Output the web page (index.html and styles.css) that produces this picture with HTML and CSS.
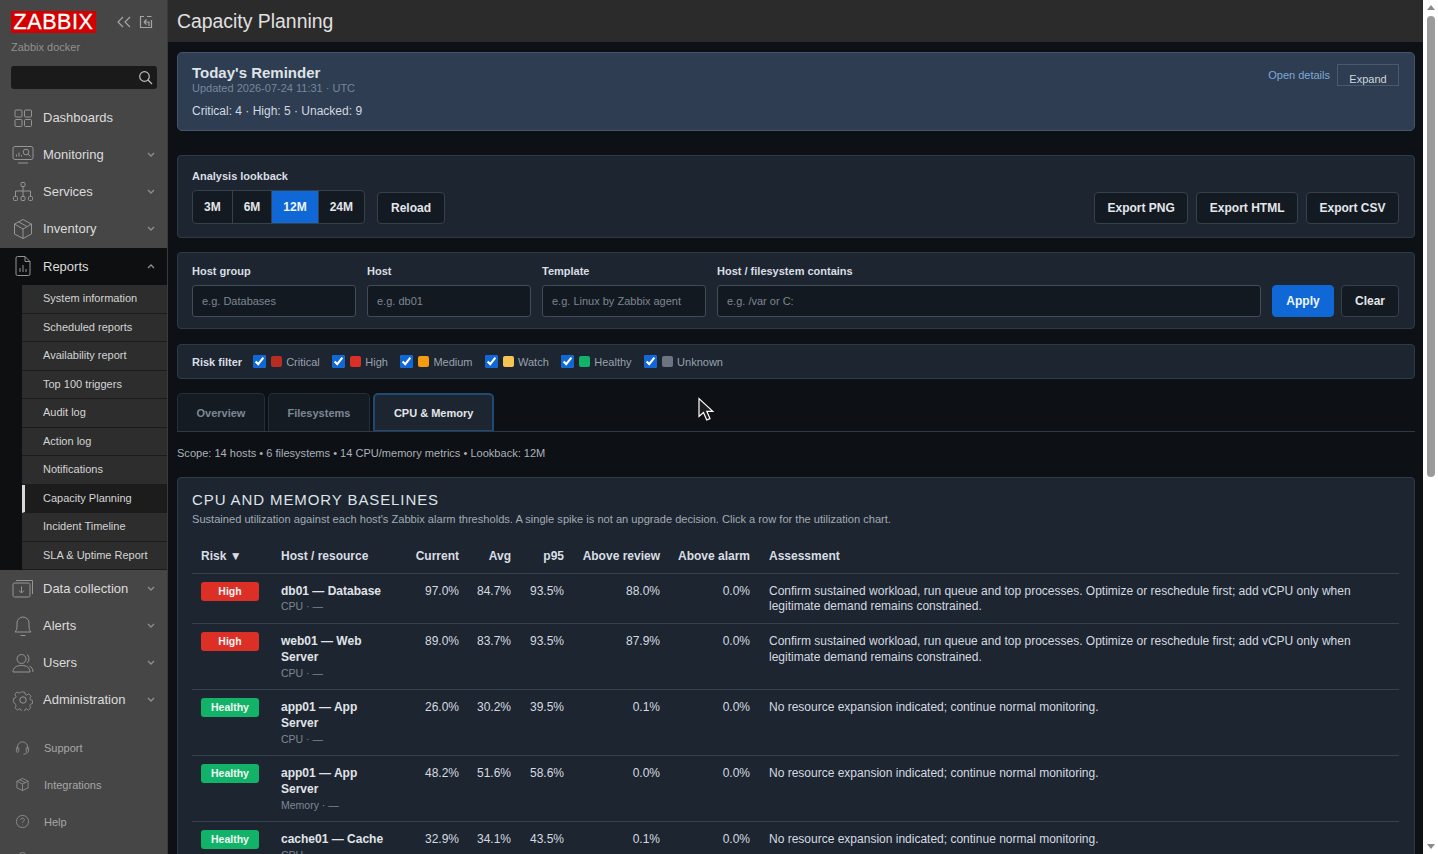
FILE: index.html
```html
<!DOCTYPE html>
<html lang="en">
<head>
  <meta charset="UTF-8" />
  <title>Capacity Planning</title>
  <link rel="stylesheet" href="styles.css">
</head>
<body>

  <aside class="sidebar">
    <div class="brand">
      <div class="logo">ZABBIX</div>
      <div class="brand-tools">
        <svg width="16" height="14" viewBox="0 0 16 14"><path d="M7 2 2 7l5 5M14 2 9 7l5 5"/></svg>
        <svg width="14" height="14" viewBox="0 0 14 14"><path d="M5 1.500H1.500v11h11V5M8 1.500h4.500M5 7l2.500-2.500M5 7l2.500 2.500M5 7h5v4"/></svg>
      </div>
    </div>
    <div class="instance">Zabbix docker</div>
    <div class="search">
      <svg width="15" height="15" viewBox="0 0 15 15"><circle cx="6.500" cy="6.500" r="4.800"/><path d="m10 10 4 4"/></svg>
    </div>

    <nav class="menu">
      <a class="menu-item">
        <svg class="menu-icon" viewBox="0 0 22 22"><rect x="3" y="3" width="7" height="7" rx="1"/><rect x="12.500" y="3" width="7" height="7" rx="1"/><rect x="3" y="12.500" width="7" height="7" rx="1"/><rect x="12.500" y="12.500" width="7" height="7" rx="1"/></svg>
        <span>Dashboards</span>
      </a>
      <a class="menu-item">
        <svg class="menu-icon" viewBox="0 0 22 22"><rect x="1" y="2.500" width="20" height="13" rx="2"/><path d="M6 19h10M4.500 12.500v-2M7 12.500v-4M9.500 12.500v-1.500"/><circle cx="14" cy="8" r="2.800"/><path d="m16 10 2.500 2.500"/></svg>
        <span>Monitoring</span>
        <svg class="chev" width="8" height="5" viewBox="0 0 8 5"><path d="m1 1 3 3 3-3"/></svg>
      </a>
      <a class="menu-item">
        <svg class="menu-icon" viewBox="0 0 22 22"><rect x="9" y="1.500" width="4" height="4" rx="1"/><path d="M11 5.500V10M3.500 15v-5h15v5M11 10v5"/><rect x="1.500" y="15.500" width="4" height="4" rx="1"/><rect x="9" y="15.500" width="4" height="4" rx="1"/><rect x="16.500" y="15.500" width="4" height="4" rx="1"/></svg>
        <span>Services</span>
        <svg class="chev" width="8" height="5" viewBox="0 0 8 5"><path d="m1 1 3 3 3-3"/></svg>
      </a>
      <a class="menu-item">
        <svg class="menu-icon" viewBox="0 0 22 22"><path d="M11 1.500 19.500 6v10L11 20.500 2.500 16V6zM2.500 6 11 11l8.500-5M11 11v9.500M6.500 3.800l8.500 4.700"/></svg>
        <span>Inventory</span>
        <svg class="chev" width="8" height="5" viewBox="0 0 8 5"><path d="m1 1 3 3 3-3"/></svg>
      </a>
      <a class="menu-item open">
        <svg class="menu-icon" viewBox="0 0 22 22"><path d="M4 3a1.500 1.500 0 0 1 1.500-1.500H13l5 5V19a1.500 1.500 0 0 1-1.500 1.500h-11A1.500 1.500 0 0 1 4 19zM13 1.500V6.500h5M8 17v-4M11 17v-7M14 17v-3"/></svg>
        <span>Reports</span>
        <svg class="chev" width="8" height="5" viewBox="0 0 8 5"><path d="m1 4 3-3 3 3"/></svg>
      </a>
      <div class="submenu">
        <a>System information</a>
        <a>Scheduled reports</a>
        <a>Availability report</a>
        <a>Top 100 triggers</a>
        <a>Audit log</a>
        <a>Action log</a>
        <a>Notifications</a>
        <a class="current">Capacity Planning</a>
        <a>Incident Timeline</a>
        <a>SLA &amp; Uptime Report</a>
      </div>
      <a class="menu-item">
        <svg class="menu-icon" viewBox="0 0 22 22"><rect x="1" y="5" width="17" height="14" rx="1.500"/><path d="M4 2.500h16.500V16M9.500 8.500v6M7 12.500l2.500 2.500 2.500-2.500"/></svg>
        <span>Data collection</span>
        <svg class="chev" width="8" height="5" viewBox="0 0 8 5"><path d="m1 1 3 3 3-3"/></svg>
      </a>
      <a class="menu-item">
        <svg class="menu-icon" viewBox="0 0 22 22"><path d="M3 17c1.500-1.500 2-3 2-6V8a6 6 0 0 1 12 0v3c0 3 .5 4.500 2 6zM8.500 20.500h5"/></svg>
        <span>Alerts</span>
        <svg class="chev" width="8" height="5" viewBox="0 0 8 5"><path d="m1 1 3 3 3-3"/></svg>
      </a>
      <a class="menu-item">
        <svg class="menu-icon" viewBox="0 0 22 22"><circle cx="9.500" cy="7" r="4.500"/><path d="M1 20c0-4 3-6.500 8.500-6.500S18 16 18 20zM15 2.500c2.500 1.500 2.500 7 0 8.500M17.500 14c2 1 3.500 3 3.500 6"/></svg>
        <span>Users</span>
        <svg class="chev" width="8" height="5" viewBox="0 0 8 5"><path d="m1 1 3 3 3-3"/></svg>
      </a>
      <a class="menu-item">
        <svg class="menu-icon" viewBox="0 0 22 22"><circle cx="11" cy="11" r="3.200"/><path d="M9 1.500h4l.6 2.800 1.800.8 2.500-1.500 2.700 2.900-1.600 2.300.7 1.900 2.500.8v3.800l-2.500.7-.8 1.800 1.400 2.400-2.800 2.700-2.400-1.500-1.800.7-.6 2.800H9l-.6-2.800-1.800-.7-2.400 1.500-2.800-2.700 1.400-2.400-.8-1.800L-.5 13V9.200l2.500-.8.700-1.900L1.100 4.200l2.700-2.900 2.500 1.500 1.800-.8z" transform="translate(1.800 1.800) scale(.84)"/></svg>
        <span>Administration</span>
        <svg class="chev" width="8" height="5" viewBox="0 0 8 5"><path d="m1 1 3 3 3-3"/></svg>
      </a>
    </nav>

    <nav class="side-footer">
      <a>
        <svg class="foot-icon" viewBox="0 0 16 16"><path d="M2.500 10V7.500a5.500 5.500 0 0 1 11 0V10"/><rect x="1.500" y="8" width="2.500" height="5" rx="1"/><rect x="12" y="8" width="2.500" height="5" rx="1"/><path d="M13 13c0 1.500-2 2-4 2"/></svg>
        <span>Support</span>
      </a>
      <a>
        <svg class="foot-icon" viewBox="0 0 16 16"><path d="M8 1.500 14 4.500v7l-6 3-6-3v-7zM2 4.500l6 3 6-3M8 7.500v7M5 3l6 3"/></svg>
        <span>Integrations</span>
      </a>
      <a>
        <svg class="foot-icon" viewBox="0 0 16 16"><circle cx="8" cy="8" r="6.500"/><path d="M6 6.300c0-2.500 4-2.500 4 0 0 1.500-2 1.500-2 3.200M8 11.500v.5"/></svg>
        <span>Help</span>
      </a>
      <a>
        <svg class="foot-icon" viewBox="0 0 16 16"><circle cx="8" cy="5" r="3.500"/><path d="M2 15c0-3 2.500-5 6-5s6 2 6 5"/></svg>
      </a>
    </nav>
  </aside>

  <div class="page">
    <header class="topbar"><h1>Capacity Planning</h1></header>

    <main class="content">

      <section class="reminder">
        <div>
          <div class="reminder-title">Today's Reminder</div>
          <div class="reminder-time">Updated 2026-07-24 11:31 · UTC</div>
          <div class="reminder-counts">Critical: 4 · High: 5 · Unacked: 9</div>
        </div>
        <div class="reminder-actions">
          <a class="details-link">Open details</a>
          <button class="expand-btn">Expand</button>
        </div>
      </section>

      <section class="panel lookback">
        <div>
          <div class="field-label">Analysis lookback</div>
          <div class="lookback-row">
            <div class="segment">
              <button>3M</button>
              <button>6M</button>
              <button class="active">12M</button>
              <button>24M</button>
            </div>
            <button class="btn">Reload</button>
          </div>
        </div>
        <div class="exports">
          <button class="btn">Export PNG</button>
          <button class="btn">Export HTML</button>
          <button class="btn">Export CSV</button>
        </div>
      </section>

      <section class="panel filters">
        <label class="field w-small"><span class="field-label">Host group</span><input placeholder="e.g. Databases"></label>
        <label class="field w-small"><span class="field-label">Host</span><input placeholder="e.g. db01"></label>
        <label class="field w-small"><span class="field-label">Template</span><input placeholder="e.g. Linux by Zabbix agent"></label>
        <label class="field w-grow"><span class="field-label">Host / filesystem contains</span><input placeholder="e.g. /var or C:"></label>
        <button class="btn primary">Apply</button>
        <button class="btn clear">Clear</button>
      </section>

      <section class="panel risk-filter">
        <strong>Risk filter</strong>
        <label><input type="checkbox" checked><i class="swatch critical"></i>Critical</label>
        <label><input type="checkbox" checked><i class="swatch high"></i>High</label>
        <label><input type="checkbox" checked><i class="swatch medium"></i>Medium</label>
        <label><input type="checkbox" checked><i class="swatch watch"></i>Watch</label>
        <label><input type="checkbox" checked><i class="swatch healthy"></i>Healthy</label>
        <label><input type="checkbox" checked><i class="swatch unknown"></i>Unknown</label>
      </section>

      <div class="tabs">
        <button class="tab">Overview</button>
        <button class="tab">Filesystems</button>
        <button class="tab active">CPU &amp; Memory</button>
      </div>

      <div class="scope">Scope: 14 hosts • 6 filesystems • 14 CPU/memory metrics • Lookback: 12M</div>

      <section class="panel baselines">
        <h2>CPU and memory baselines</h2>
        <p>Sustained utilization against each host's Zabbix alarm thresholds. A single spike is not an upgrade decision. Click a row for the utilization chart.</p>
        <table>
          <colgroup>
            <col class="c-risk"><col class="c-host"><col class="c-cur"><col class="c-avg"><col class="c-p95"><col class="c-review"><col class="c-alarm"><col>
          </colgroup>
          <thead>
            <tr>
              <th>Risk ▼</th>
              <th>Host / resource</th>
              <th class="num">Current</th>
              <th class="num">Avg</th>
              <th class="num">p95</th>
              <th class="num">Above review</th>
              <th class="num">Above alarm</th>
              <th>Assessment</th>
            </tr>
          </thead>
          <tbody>
            <tr>
              <td><span class="badge high">High</span></td>
              <td><div class="host">db01 — Database</div><div class="res">CPU · —</div></td>
              <td class="num">97.0%</td><td class="num">84.7%</td><td class="num">93.5%</td><td class="num">88.0%</td><td class="num">0.0%</td>
              <td>Confirm sustained workload, run queue and top processes. Optimize or reschedule first; add vCPU only when legitimate demand remains constrained.</td>
            </tr>
            <tr>
              <td><span class="badge high">High</span></td>
              <td><div class="host">web01 — Web Server</div><div class="res">CPU · —</div></td>
              <td class="num">89.0%</td><td class="num">83.7%</td><td class="num">93.5%</td><td class="num">87.9%</td><td class="num">0.0%</td>
              <td>Confirm sustained workload, run queue and top processes. Optimize or reschedule first; add vCPU only when legitimate demand remains constrained.</td>
            </tr>
            <tr>
              <td><span class="badge healthy">Healthy</span></td>
              <td><div class="host">app01 — App Server</div><div class="res">CPU · —</div></td>
              <td class="num">26.0%</td><td class="num">30.2%</td><td class="num">39.5%</td><td class="num">0.1%</td><td class="num">0.0%</td>
              <td>No resource expansion indicated; continue normal monitoring.</td>
            </tr>
            <tr>
              <td><span class="badge healthy">Healthy</span></td>
              <td><div class="host">app01 — App Server</div><div class="res">Memory · —</div></td>
              <td class="num">48.2%</td><td class="num">51.6%</td><td class="num">58.6%</td><td class="num">0.0%</td><td class="num">0.0%</td>
              <td>No resource expansion indicated; continue normal monitoring.</td>
            </tr>
            <tr>
              <td><span class="badge healthy">Healthy</span></td>
              <td><div class="host">cache01 — Cache</div><div class="res">CPU · —</div></td>
              <td class="num">32.9%</td><td class="num">34.1%</td><td class="num">43.5%</td><td class="num">0.1%</td><td class="num">0.0%</td>
              <td>No resource expansion indicated; continue normal monitoring.</td>
            </tr>
          </tbody>
        </table>
      </section>
    </main>
  </div>

  <div class="scrollbar">
    <i class="arrow up"></i>
    <div class="thumb-track"><div class="thumb"></div></div>
    <i class="arrow down"></i>
  </div>

  <!-- mouse pointer from the capture -->
  <svg class="pointer" width="18" height="25" viewBox="0 0 18 25"><path d="M2 1.500v18l4.500-4 3.200 7.500 3.300-1.400-3.200-7.300h6z"/></svg>

</body>
</html>
```

FILE: styles.css
```css
* {
  box-sizing: border-box;
}

html, body {
  height: 100%;
}

body {
  margin: 0;
  display: flex;
  overflow: hidden;
  background-color: #0d1014;
  color: #d9dee4;
  font-family: 'Liberation Sans', Arial, sans-serif;
  font-size: 12px;
}

button, input {
  font-family: inherit;
}

/* Sidebar */
.sidebar {
  flex: 0 0 168px;
  height: 854px;
  overflow: hidden;
  background-color: #464646;
  border-right: 1px solid #3a3a3a;
}

.brand {
  display: flex;
  align-items: center;
  justify-content: space-between;
  padding: 11px 14px 0 11px;
}

.logo {
  width: 85px;
  height: 22px;
  background-color: #d40000;
  color: #fff;
  font-size: 21.500px;
  line-height: 23px;
  text-align: center;
  letter-spacing: 0.6px;
  -webkit-text-stroke: 0.3px #fff;
}

.brand-tools {
  display: flex;
  align-items: center;
  gap: 7px;
}

.brand-tools svg {
  fill: none;
  stroke: #a5a5a5;
  stroke-width: 1.2;
}

.instance {
  margin: 7px 0 0 11px;
  color: #909090;
  font-size: 11px;
  line-height: 14px;
}

.search {
  display: flex;
  align-items: center;
  justify-content: flex-end;
  height: 23px;
  margin: 12px 10px 0 11px;
  padding-right: 4px;
  background-color: #1a1a1a;
  border-radius: 3px;
}

.search svg {
  fill: none;
  stroke: #bdbdbd;
  stroke-width: 1.2;
}

.menu {
  margin-top: 10px;
}

.menu-item {
  display: flex;
  align-items: center;
  position: relative;
  height: 37px;
  padding-left: 12px;
  color: #dcdcdc;
  font-size: 13px;
}

.menu-item span {
  margin-left: 9px;
}

.menu-item.open {
  background-color: #0e0f11;
  border-top: 1px solid #464646;
}

.menu-icon {
  flex: none;
  width: 22px;
  height: 22px;
  fill: none;
  stroke: #959595;
  stroke-width: 1;
}

.chev {
  margin-left: auto;
  margin-right: 12px;
  fill: none;
  stroke: #8f8f8f;
  stroke-width: 1.3;
}

.submenu {
  padding: 1px 0 0 22px;
  background-color: #0e0f11;
}

.submenu a {
  display: block;
  height: 28.500px;
  padding-left: 21px;
  background-color: #2d2d2d;
  border-bottom: 1px solid #1b1b1b;
  color: #d4d4d4;
  font-size: 11px;
  line-height: 27px;
}

.submenu a.current {
  padding-left: 18px;
  background-color: #1c1c1c;
  border-left: 3px solid #d8d8d8;
}

.side-footer {
  margin-top: 11px;
}

.side-footer a {
  display: flex;
  align-items: center;
  height: 37px;
  padding-left: 15px;
  color: #a6a6a6;
  font-size: 11px;
}

.side-footer span {
  margin-left: 14px;
}

.foot-icon {
  flex: none;
  width: 15px;
  height: 15px;
  fill: none;
  stroke: #8c8c8c;
  stroke-width: 1;
}

/* Main column */
.page {
  flex: 0 0 1255px;
  height: 854px;
  overflow: hidden;
}

.topbar {
  height: 42px;
  padding: 10px 9px 0;
  background-color: #2b2b2b;
}

.topbar h1 {
  margin: 0;
  color: #e0e0e0;
  font-size: 19.4px;
  font-weight: normal;
  line-height: 23px;
}

.content {
  padding: 10px 8px 0 9px;
}

.panel {
  background-color: #1d2530;
  border: 1px solid #2f3a47;
  border-radius: 4px;
}

.reminder {
  display: flex;
  justify-content: space-between;
  height: 79px;
  padding: 11px 15px 0 14px;
  background-color: #2e3d51;
  border: 1px solid #46566a;
  border-radius: 5px;
}

.reminder-title {
  color: #dfe3e8;
  font-size: 15px;
  font-weight: bold;
  line-height: 17px;
}

.reminder-time {
  color: #76879b;
  font-size: 11px;
  line-height: 14px;
}

.reminder-counts {
  margin-top: 8.500px;
  color: #d3d9e0;
  font-size: 12px;
  line-height: 15px;
}

.reminder-actions {
  display: flex;
  align-items: flex-start;
  gap: 7px;
}

.details-link {
  margin-top: 4px;
  color: #7fa8d8;
  font-size: 11px;
  line-height: 15px;
}

.expand-btn {
  width: 62px;
  height: 22px;
  padding: 7px 0 0;
  background: none;
  border: 1px solid #4a5a6e;
  color: #d0d6dd;
  font-size: 11px;
  line-height: 14px;
}

.field-label {
  display: block;
  color: #d9dee4;
  font-size: 11px;
  font-weight: bold;
  line-height: 14px;
}

.lookback {
  display: flex;
  justify-content: space-between;
  align-items: flex-end;
  height: 83px;
  margin-top: 24px;
  padding: 14px 15px 13px 14px;
}

.lookback-row {
  display: flex;
  align-items: flex-end;
  gap: 12px;
  margin-top: 7px;
}

.segment {
  display: flex;
  background-color: #141a22;
  border: 1px solid #36414e;
  border-radius: 4px;
  overflow: hidden;
}

.segment button {
  height: 32px;
  padding: 0 11px;
  background: none;
  border: 0;
  border-right: 1px solid #36414e;
  color: #e3e6ea;
  font-size: 12px;
  font-weight: bold;
}

.segment button:last-child {
  border-right: 0;
}

.segment button.active {
  background-color: #0f68d6;
  color: #f1f6fc;
}

.btn {
  height: 32px;
  padding: 0 13px;
  background-color: #141a22;
  border: 1px solid #36414e;
  border-radius: 4px;
  color: #e3e6ea;
  font-size: 12px;
  font-weight: bold;
}

.btn.primary {
  width: 62px;
  margin-left: 11px;
  padding: 0;
  background-color: #0f68d6;
  border-color: #0f68d6;
  color: #f1f6fc;
}

.btn.clear {
  width: 58px;
  margin-left: 7px;
  padding: 0;
}

.exports {
  display: flex;
  gap: 8px;
}

.exports .btn {
  padding: 0 12.500px;
}

.filters {
  display: flex;
  align-items: flex-end;
  height: 77px;
  margin-top: 14px;
  padding: 0 15px 11px 14px;
}

.field {
  margin-right: 11px;
}

.field:last-of-type {
  margin-right: 0;
}

.w-small {
  flex: 0 0 164px;
}

.w-grow {
  flex: 1;
}

.field input {
  display: block;
  width: 100%;
  height: 32px;
  margin-top: 7px;
  padding: 0 9px;
  background-color: #131920;
  border: 1px solid #414c59;
  border-radius: 3px;
  color: #d9dee4;
  font-size: 11px;
}

.field input::placeholder {
  color: #7c8692;
  opacity: 1;
}

.risk-filter {
  display: flex;
  align-items: center;
  gap: 12.500px;
  height: 35px;
  margin-top: 15px;
  padding: 0 15px 0 14px;
  color: #98a2ad;
  font-size: 11px;
}

.risk-filter strong {
  margin-right: -1.500px;
  color: #d9dee4;
}

.risk-filter label {
  display: flex;
  align-items: center;
}

.risk-filter input {
  width: 13px;
  height: 13px;
  margin: 0 5px 0 0;
  accent-color: #0f68d6;
}

.swatch {
  width: 11px;
  height: 11px;
  margin-right: 4px;
  border-radius: 2px;
}

.swatch.critical { background-color: #b92c22; }
.swatch.high { background-color: #dc2f26; }
.swatch.medium { background-color: #f39c12; }
.swatch.watch { background-color: #f6c453; }
.swatch.healthy { background-color: #12b368; }
.swatch.unknown { background-color: #6b7480; }

.tabs {
  display: flex;
  gap: 3px;
  height: 39px;
  margin-top: 14px;
  border-bottom: 1px solid #2f3a47;
}

.tab {
  height: 38px;
  padding: 0 18.500px;
  background-color: #151b23;
  border: 1px solid #252e39;
  border-bottom: 0;
  border-radius: 5px 5px 0 0;
  color: #7e8894;
  font-size: 11px;
  font-weight: bold;
}

.tab.active {
  padding: 0 19px;
  background-color: #1d2530;
  border: 2px solid #1f4a75;
  border-bottom: 1px solid #1f4a75;
  color: #e3e6ea;
}

.scope {
  margin-top: 14px;
  color: #aab2bb;
  font-size: 11.050px;
  line-height: 14px;
}

.baselines {
  margin-top: 17px;
  padding: 13px 15px 0 14px;
}

.baselines h2 {
  margin: 0;
  color: #dfe3e8;
  font-size: 15px;
  font-weight: normal;
  line-height: 18px;
  letter-spacing: 0.9px;
  text-transform: uppercase;
}

.baselines p {
  margin: 3px 0 0;
  color: #a2abb5;
  font-size: 11.100px;
  line-height: 14px;
}

table {
  width: 1207px;
  margin-top: 12px;
  border-collapse: collapse;
  table-layout: fixed;
}

.c-risk { width: 80px; }
.c-host { width: 134px; }
.c-cur { width: 62px; }
.c-avg { width: 52px; }
.c-p95 { width: 53px; }
.c-review { width: 96px; }
.c-alarm { width: 90px; }

th {
  height: 35px;
  padding: 1px 9px 0;
  border-bottom: 1px solid #36414e;
  color: #d9dee4;
  font-size: 12px;
  text-align: left;
  white-space: nowrap;
}

td {
  padding: 10px 9px 8.800px;
  border-bottom: 1px solid #36414e;
  color: #d5dae0;
  line-height: 15.600px;
  vertical-align: top;
}

th:last-child, td:last-child {
  padding-left: 10px;
}

.num {
  text-align: right;
}

.host {
  color: #e0e4e9;
  font-weight: bold;
}

.res {
  color: #7e8894;
  font-size: 10.500px;
  line-height: 15px;
}

.badge {
  display: block;
  width: 58px;
  height: 19px;
  margin-top: -2px;
  background-color: #12b368;
  border-radius: 3px;
  color: #f3f6f4;
  font-size: 10.500px;
  font-weight: bold;
  line-height: 19px;
  text-align: center;
}

.badge.high {
  background-color: #dc2f26;
}

/* Browser scrollbar */
.scrollbar {
  display: flex;
  flex-direction: column;
  align-items: center;
  flex: 0 0 15px;
  height: 854px;
  padding: 5px 0;
  background-color: #fff;
}

.arrow {
  width: 0;
  height: 0;
  border-left: 4px solid transparent;
  border-right: 4px solid transparent;
}

.arrow.up {
  border-bottom: 5px solid #8a8a8a;
}

.arrow.down {
  border-top: 5px solid #8a8a8a;
}

.thumb-track {
  flex: 1;
  width: 100%;
  padding: 6px 3px 0 4px;
}

.thumb {
  height: 461px;
  background-color: #9b9b9b;
  border-radius: 4px;
}

.pointer {
  position: absolute;
  left: 697px;
  top: 397px;
  fill: #1b1d20;
  stroke: #fff;
  stroke-width: 1.2;
}
```
